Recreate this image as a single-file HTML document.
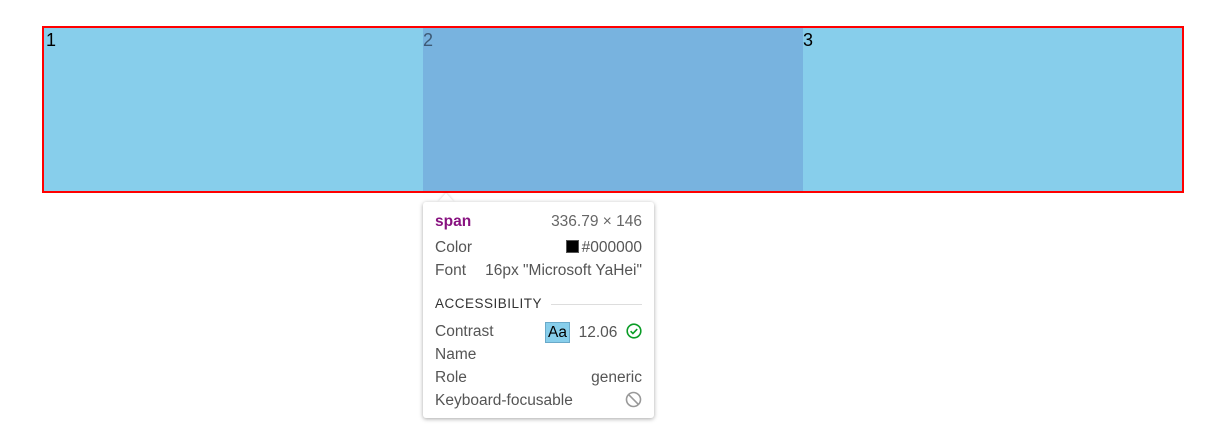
<!DOCTYPE html>
<html><head><meta charset="utf-8"><style>
html,body{margin:0;padding:0;background:#fff;width:1217px;height:434px;overflow:hidden;font-family:"Liberation Sans",sans-serif}
.box{position:absolute;left:42px;top:26px;width:1138px;height:163px;border:2px solid #f00;background:#87ceeb}
.c{position:absolute;top:0;height:163px;font-size:18px;line-height:24px;color:#000}
.c2{background:#78b3df;color:#3d5a75}
.tip{position:absolute;left:423px;top:202px;width:231px;height:216px;background:#fff;border-radius:3px;box-shadow:0 1px 4px rgba(0,0,0,.35);font-size:15.5px;color:#555}
.arrow{position:absolute;left:438px;top:193px;width:0;height:0;border-left:8px solid transparent;border-right:8px solid transparent;border-bottom:9px solid #fff;filter:drop-shadow(0 -1px 1px rgba(0,0,0,.15))}
.r{position:absolute;left:12px;right:12px;height:20px;line-height:20px;white-space:nowrap}
.rt{position:absolute;right:0;top:0}
</style></head><body>
<div class="box">
<div class="c" style="left:0;width:379px;padding-left:2px">1</div>
<div class="c c2" style="left:379px;width:380px">2</div>
<div class="c" style="left:759px;width:379px">3</div>
</div>
<div class="arrow"></div>
<div class="tip">
<div class="r" style="top:10px"><b style="color:#881280">span</b><span class="rt" style="color:#666">336.79 × 146</span></div>
<div class="r" style="top:36px">Color<span class="rt"><span style="display:inline-block;width:11px;height:11px;background:#000;border:1px solid #555;vertical-align:-1px;margin-right:3px"></span>#000000</span></div>
<div class="r" style="top:59px">Font<span class="rt">16px "Microsoft YaHei"</span></div>
<div class="r" style="top:92px;color:#333;font-size:13.5px;letter-spacing:.5px">ACCESSIBILITY<span style="position:absolute;left:116px;right:0;top:10px;border-top:1px solid #ddd"></span></div>
<div class="r" style="top:120px">Contrast<span class="rt"><span style="display:inline-block;background:#87ceeb;border:1px solid #6aa9c9;color:#000;padding:0 2px;line-height:19px">Aa</span>&nbsp;&nbsp;12.06&nbsp;&nbsp;<svg width="16" height="16" viewBox="0 0 16 16" style="vertical-align:-2px"><circle cx="8" cy="8" r="6.8" fill="none" stroke="#0a9c26" stroke-width="1.6"/><path d="M4.6 8.2l2.3 2.3 4.3-4.4" fill="none" stroke="#0a9c26" stroke-width="1.6"/></svg></span></div>
<div class="r" style="top:143px">Name</div>
<div class="r" style="top:166px">Role<span class="rt">generic</span></div>
<div class="r" style="top:189px">Keyboard-focusable<span class="rt"><svg width="17" height="17" viewBox="0 0 16 16" style="vertical-align:-2px"><circle cx="8" cy="8" r="6.6" fill="none" stroke="#999" stroke-width="1.5"/><path d="M3.4 3.4l9.2 9.2" stroke="#999" stroke-width="1.5"/></svg></span></div>
</div>
</body></html>
